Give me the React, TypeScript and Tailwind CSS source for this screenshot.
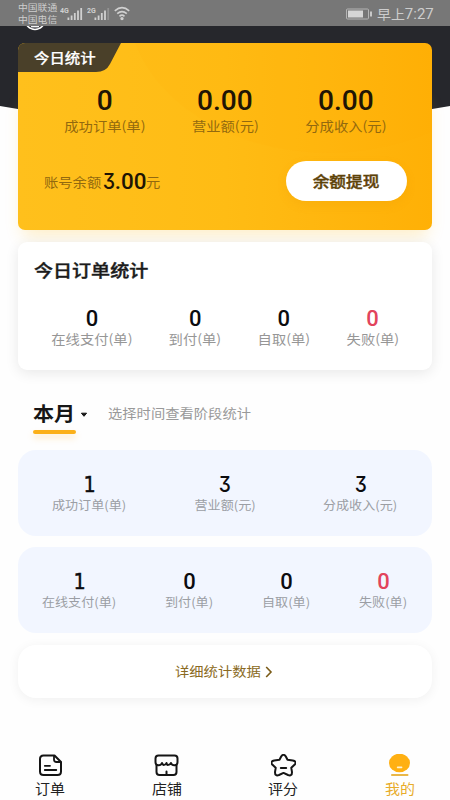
import React from 'react'

const cjk = "font-['Noto_Sans_CJK_SC',sans-serif] whitespace-nowrap"

function Digits({ value, className }: { value: string; className: string }) {
  return (
    <span className={`block whitespace-nowrap font-medium font-[Roboto,sans-serif] ${className}`}>
      {value.split('').map((c, i) =>
        c === '3' ? (
          <span key={i} className="-mx-[0.02em] inline-block scale-x-[0.9] font-[Inter,sans-serif] [font-feature-settings:'cv09'] text-[0.97em]">3</span>
        ) : c === '1' ? (
          <span key={i} className="inline-block scale-x-[0.92] font-['DejaVu_Sans',sans-serif] font-normal text-[0.95em] [-webkit-text-stroke:0.4px_currentColor]">1</span>
        ) : (
          <span key={i}>{c}</span>
        ),
      )}
    </span>
  )
}

type StatProps = { value: string; label: string; width: string; red?: boolean; size?: 'lg' | 'md' | 'sm' }

function Stat({ value, label, width, red, size = 'sm' }: StatProps) {
  const lg = size === 'lg'
  return (
    <div className={`flex flex-col items-center ${width}`}>
      <Digits
        value={value}
        className={`${lg ? 'h-7 scale-x-[1.04] text-[27px] leading-7 text-[#201405]' : 'h-[22px] text-[22px] leading-[23px]'} ${red ? 'text-[#e2445c]' : lg ? '' : 'text-[#0c0c0f]'}`}
      />
      <span
        className={`${cjk} block h-5 leading-5 ${lg ? 'mt-px text-[13px] scale-x-[1.1] text-[#92690f]' : size === 'md' ? 'text-[13px] scale-x-[1.1] text-[#969696]' : 'text-[12px] scale-x-[1.09] text-[#9b9ea4]'}`}
      >
        {label}
      </span>
    </div>
  )
}

function Signal({ label }: { label: string }) {
  return (
    <svg className="h-4 w-[27px]" viewBox="0 0 27 16" fill="#d0d0d0">
      <text x="0" y="8" fontSize="7" fontWeight="700" fontFamily="Roboto, sans-serif">{label}</text>
      <rect x="7.5" y="12.5" width="1.8" height="2.5" />
      <rect x="10.7" y="10.5" width="1.8" height="4.5" />
      <rect x="13.9" y="8" width="1.8" height="7" />
      <rect x="17.1" y="5.5" width="1.8" height="9.5" />
      <rect x="20.3" y="3" width="1.8" height="12" opacity={label === '2G' ? 0.3 : 1} />
    </svg>
  )
}

function StatusBar() {
  return (
    <div className="relative flex h-[26px] items-center bg-[#777777] pl-[18px] pr-[15px] text-[#cdcdcd]">
      <div className={`${cjk} w-[42px] pt-[2px] text-[9px] leading-[12px]`}>
        <div className="origin-left scale-x-[1.09]">中国联通</div>
        <div className="origin-left scale-x-[1.09]">中国电信</div>
      </div>
      <Signal label="4G" />
      <Signal label="2G" />
      <svg className="h-4 w-[18px]" viewBox="0 0 18 16" fill="none" stroke="#d0d0d0" strokeWidth="1.6">
        <path d="M0.8 5.9Q8 -0.6 15.2 5.9M3.2 8.7Q8 4.4 12.8 8.7M5.5 11.3Q8 9.1 10.5 11.3" />
        <circle cx="8" cy="13.6" r="0.9" fill="#d0d0d0" />
      </svg>
      <svg className="ml-auto mt-px h-3 w-[26px]" viewBox="0 0 26 12">
        <rect x="0.5" y="1" width="22" height="10" rx="1" fill="none" stroke="#b5b5b5" />
        <rect x="2" y="2.5" width="15" height="7" fill="#d6d6d6" />
        <rect x="24" y="3.5" width="2" height="5" fill="#c8c8c8" />
      </svg>
      <span className={`${cjk} ml-[5px] w-[58px] pt-px text-[13px] leading-6`}>
        <span className="inline-block origin-left scale-x-[1.07]">早上<span className="font-[Roboto,sans-serif] text-[14px]">7:27</span></span>
      </span>
    </div>
  )
}

function TodayCard() {
  return (
    <section className="relative mx-[18px] mt-[17px] h-[187px] overflow-hidden rounded-[7px] bg-linear-to-r from-[#ffc01c] via-[#ffbc14] to-[#ffb006]">
      <svg className="absolute inset-0 h-full w-full" viewBox="0 0 414 187">
        <path d="M0 0H103L92 21Q88 29 78 29H0Z" fill="#4a4029" />
        <ellipse cx="310" cy="-40" rx="200" ry="150" fill="#ffaa00" opacity="0.07" />
      </svg>
      <div className={`${cjk} relative h-[29px] pl-4 text-[14px] font-medium leading-[28px] text-white [-webkit-text-stroke:0.2px_currentColor]`}>
        <span className="inline-block origin-left scale-x-[1.1]">今日统计</span>
      </div>
      <div className="relative flex justify-between px-[46px] pt-[15px]">
        <Stat size="lg" value="0" label="成功订单(单)" width="w-[81px]" />
        <Stat size="lg" value="0.00" label="营业额(元)" width="w-[66px]" />
        <Stat size="lg" value="0.00" label="分成收入(元)" width="w-[81px]" />
      </div>
      <div className="relative mt-[25px] flex h-10 items-center pl-[26px] pr-[25px]">
        <span className={`${cjk} w-[58px] pt-[2px] text-[13px] text-[#92690f]`}><span className="inline-block origin-left scale-x-[1.1]">账号余额</span></span>
        <span className="w-11"><Digits value="3.00" className="origin-left scale-x-[1.02] text-[22px] leading-6 text-[#201405]" /></span>
        <span className={`${cjk} pt-[2px] text-[13px] text-[#92690f]`}><span className="inline-block origin-left scale-x-[1.1]">元</span></span>
        <button className={`${cjk} ml-auto h-10 w-[121px] rounded-full bg-white text-[15px] font-medium text-[#5d4208] shadow-[0_4px_10px_rgba(220,140,0,0.15)] [-webkit-text-stroke:0.4px_currentColor]`}>
          <span className="inline-block scale-x-[1.11]">余额提现</span>
        </button>
      </div>
    </section>
  )
}

const tabs = [
  {
    label: '订单',
    icon: (
      <g>
        <path d="M14.5 1.5H5.5Q2 1.5 2 5V17.5Q2 21 5.5 21H19.5Q23 21 23 17.5V8L16.5 1.5H14.5" />
        <path d="M16 2V5.5Q16 8 18.5 8H22.5M6.8 11.8H12M6.8 16H18.3" strokeWidth="1.8" />
      </g>
    ),
  },
  {
    label: '店铺',
    icon: (
      <g>
        <path d="M4.5 1.5H20.5Q23.5 1.5 23.5 4.5V8Q23.5 11 20.8 11.3Q17.8 11.5 17 9Q15.8 11 13.8 11Q12.8 10.8 12.5 9Q11.8 11 9.8 11Q8.2 10.5 8 9Q7 11.5 4.2 11.3Q1.5 11 1.5 8V4.5Q1.5 1.5 4.5 1.5Z" />
        <path d="M2.5 11V18Q2.5 21 5.5 21H19.5Q22.5 21 22.5 18V11M12.5 17.5V21" />
      </g>
    ),
  },
  {
    label: '评分',
    icon: (
      <g>
        <path d="M10.3 2.3Q12.5-.6 14.7 2.3L16.5 5.8L21.8 6.5Q26.3 7.5 23.5 10.8L20.3 13.8L21 18.2Q21 22.5 17 21L12.5 18.9L8 21Q4 22.5 4 18.2L4.7 13.8L1.5 10.8Q-1.3 7.5 3.2 6.5L8.5 5.8Z" />
        <path d="M9.8 14H15.2" />
      </g>
    ),
  },
  {
    label: '我的',
    icon: (
      <g stroke="none">
        <ellipse cx="12.5" cy="9" rx="10.5" ry="9.3" fill="#ffb013" />
        <rect x="9.8" y="12.6" width="5.6" height="1.7" rx="0.8" fill="#fff2d0" />
        <rect x="4" y="20" width="17.5" height="1.9" rx="0.9" fill="#e9b748" />
      </g>
    ),
  },
]

export default function App() {
  return (
    <div className="relative flex h-[800px] w-[450px] flex-col overflow-hidden bg-[#fefefe]">
      <svg className="absolute left-0 top-0 h-[120px] w-[450px]" viewBox="0 0 450 120">
        <path d="M0 0H450V106Q225 146 0 106Z" fill="#26272c" />
        <circle cx="35" cy="19.5" r="10" fill="#33343a" stroke="#fff" strokeWidth="1.5" />
        <path d="M31 26.7H39" stroke="#fff" strokeWidth="1.3" />
      </svg>
      <StatusBar />
      <div className="relative">
        <div className="absolute left-[22px] top-[70px] h-[134px] w-[406px] rounded-lg shadow-[0_6px_16px_rgba(255,190,40,0.25)]" />
        <TodayCard />
      </div>

      <section className="relative mx-[18px] mt-3 h-[128px] rounded-[9px] bg-white shadow-[0_3px_14px_rgba(0,0,0,0.09)]">
        <h2 className={`${cjk} pl-4 pt-[14px] text-[17px] font-medium leading-7 text-[#1b1b1b] [-webkit-text-stroke:0.4px_currentColor]`}>
          <span className="inline-block origin-left scale-x-[1.12]">今日订单统计</span>
        </h2>
        <div className="mt-[23px] flex justify-between px-[33px]">
          <Stat size="md" value="0" label="在线支付(单)" width="w-[82px]" />
          <Stat size="md" value="0" label="到付(单)" width="w-[53px]" />
          <Stat size="md" value="0" label="自取(单)" width="w-[53px]" />
          <Stat size="md" value="0" label="失败(单)" width="w-[53px]" red />
        </div>
      </section>

      <div className="relative mt-[28px] flex h-[52px] pl-[33px]">
        <div className="w-[43px]">
          <div className={`${cjk} h-8 text-[19px] font-bold leading-[29px] text-[#161616]`}>
            <span className="inline-block origin-left scale-x-[1.11]">本月</span>
          </div>
          <div className="h-1 rounded-full bg-[#fbb019] shadow-[0_4px_6px_rgba(255,180,30,0.25)]" />
        </div>
        <svg className="ml-1 mt-[14px] h-[6px] w-[8px]" viewBox="0 0 8 6"><path d="M1.4 1.2H6.6L4 4.3Z" fill="#161616" stroke="#161616" strokeLinejoin="round" /></svg>
        <span className={`${cjk} ml-5 text-[13px] leading-[29px] text-[#999999]`}>
          <span className="inline-block origin-left scale-x-[1.1]">选择时间查看阶段统计</span>
        </span>
      </div>

      <section className="mx-[18px] flex h-[86px] justify-between rounded-[18px] bg-[#f2f6ff] px-[34px] pt-[23px]">
        <Stat value="1" label="成功订单(单)" width="w-[75px]" />
        <Stat value="3" label="营业额(元)" width="w-[62px]" />
        <Stat value="3" label="分成收入(元)" width="w-[75px]" />
      </section>
      <section className="mx-[18px] mt-[11px] flex h-[86px] justify-between rounded-[18px] bg-[#f2f6ff] px-6 pt-[23px]">
        <Stat value="1" label="在线支付(单)" width="w-[75px]" />
        <Stat value="0" label="到付(单)" width="w-[49px]" />
        <Stat value="0" label="自取(单)" width="w-[49px]" />
        <Stat value="0" label="失败(单)" width="w-[49px]" red />
      </section>

      <button className={`${cjk} mx-[18px] mt-3 flex h-[53px] items-center rounded-[18px] bg-white pl-[157px] text-[13px] text-[#8a6a22] shadow-[0_2px_12px_rgba(0,0,0,0.06)]`}>
        <span className="w-[90px] pb-px text-left"><span className="inline-block origin-left scale-x-[1.1]">详细统计数据</span></span>
        <svg className="h-3 w-2" viewBox="0 0 8 12" fill="none" stroke="#7a5b18" strokeWidth="1.6"><path d="M1.2 1L6 6L1.2 11" /></svg>
      </button>

      <nav className="mt-auto flex h-[50px] justify-between px-[30px]">
        {tabs.map((tab, i) => (
          <div key={tab.label} className="flex w-10 flex-col items-center pt-1">
            <svg className="h-[23px] w-[25px]" viewBox="0 0 25 23" fill="none" stroke="#151515" strokeWidth="2" strokeLinecap="round" strokeLinejoin="round">{tab.icon}</svg>
            <span className={`${cjk} mt-px text-[14px] leading-5 scale-x-[1.07] ${i === 3 ? 'text-[#e8ac2b]' : 'text-[#222222]'}`}>{tab.label}</span>
          </div>
        ))}
      </nav>
    </div>
  )
}
